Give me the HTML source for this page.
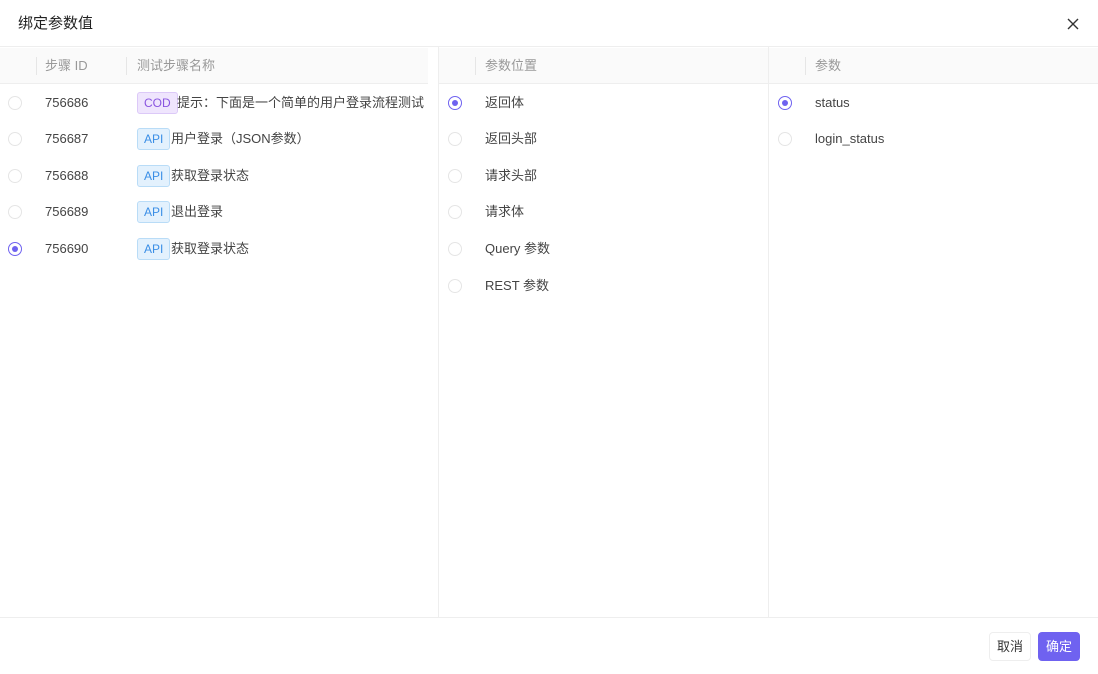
<!DOCTYPE html>
<html><head><meta charset="utf-8"><style>
*{box-sizing:border-box;margin:0;padding:0}
body{width:1098px;height:674px;background:#fff;font-family:"Liberation Sans","Noto Sans CJK SC",sans-serif;font-size:13px;line-height:18px;color:#333;position:relative;overflow:hidden}
.abs{position:absolute;white-space:nowrap}
.title{left:18px;top:14px;font-size:15px;line-height:20px;color:#222}
.hline{height:1px;background:#eee;left:0;width:1098px}
.vline{width:1px;background:#eee;top:47px;height:570px}
.thead{top:48px;height:36px;background:#fafafa;border-bottom:1px solid #eee}
.th{color:#999;top:57px}
.sep{width:1px;height:18px;background:#e6e6e6;top:57px}
.radio{width:14px;height:14px;border-radius:50%;border:1px solid #e5e5e5;background:#fff}
.radio.on{border-color:#6f62f0}
.radio.on::after{content:"";position:absolute;left:3px;top:3px;width:6px;height:6px;border-radius:50%;background:#6f62f0}
.t{color:#444}
.tag{height:22px;line-height:20px;padding:0 6px;border-radius:3px;font-size:12px}
.api{background:#e3f1fd;border:1px solid #b9dcf7;color:#3a8ee6}
.cod{background:#efe5fd;border:1px solid #dcc9f8;color:#8a55e0}
.btn{top:632px;height:29px;line-height:27px;width:42px;text-align:center;border-radius:4px;font-size:13px}
</style></head><body>
<div class="abs title">绑定参数值</div>
<svg class="abs" style="left:1066px;top:17px" width="14" height="14" viewBox="0 0 14 14"><path d="M2 2L12 12M12 2L2 12" stroke="#333" stroke-width="1.4"/></svg>
<div class="abs hline" style="top:46px"></div>
<div class="abs thead" style="left:0;width:428px"></div>
<div class="abs thead" style="left:439px;width:329px"></div>
<div class="abs thead" style="left:769px;width:329px"></div>
<div class="abs sep" style="left:36px"></div>
<div class="abs sep" style="left:126px"></div>
<div class="abs sep" style="left:475px"></div>
<div class="abs sep" style="left:805px"></div>
<div class="abs th" style="left:45px">步骤 ID</div>
<div class="abs th" style="left:137px">测试步骤名称</div>
<div class="abs th" style="left:485px">参数位置</div>
<div class="abs th" style="left:815px">参数</div>
<div class="abs vline" style="left:438px"></div>
<div class="abs vline" style="left:768px"></div>

<div class="abs radio" style="left:8px;top:96px"></div>
<div class="abs radio" style="left:8px;top:132px"></div>
<div class="abs radio" style="left:8px;top:169px"></div>
<div class="abs radio" style="left:8px;top:205px"></div>
<div class="abs radio on" style="left:8px;top:242px"></div>
<div class="abs t" style="left:45px;top:94px">756686</div>
<div class="abs t" style="left:45px;top:130px">756687</div>
<div class="abs t" style="left:45px;top:167px">756688</div>
<div class="abs t" style="left:45px;top:203px">756689</div>
<div class="abs t" style="left:45px;top:240px">756690</div>
<div class="abs tag cod" style="left:137px;top:92px">COD</div><div class="abs t" style="left:177px;top:94px">提示：下面是一个简单的用户登录流程测试</div>
<div class="abs tag api" style="left:137px;top:128px">API</div><div class="abs t" style="left:171px;top:130px">用户登录（JSON参数）</div>
<div class="abs tag api" style="left:137px;top:165px">API</div><div class="abs t" style="left:171px;top:167px">获取登录状态</div>
<div class="abs tag api" style="left:137px;top:201px">API</div><div class="abs t" style="left:171px;top:203px">退出登录</div>
<div class="abs tag api" style="left:137px;top:238px">API</div><div class="abs t" style="left:171px;top:240px">获取登录状态</div>

<div class="abs radio on" style="left:448px;top:96px"></div>
<div class="abs radio" style="left:448px;top:132px"></div>
<div class="abs radio" style="left:448px;top:169px"></div>
<div class="abs radio" style="left:448px;top:205px"></div>
<div class="abs radio" style="left:448px;top:242px"></div>
<div class="abs radio" style="left:448px;top:279px"></div>
<div class="abs t" style="left:485px;top:94px">返回体</div>
<div class="abs t" style="left:485px;top:130px">返回头部</div>
<div class="abs t" style="left:485px;top:167px">请求头部</div>
<div class="abs t" style="left:485px;top:203px">请求体</div>
<div class="abs t" style="left:485px;top:240px">Query 参数</div>
<div class="abs t" style="left:485px;top:277px">REST 参数</div>

<div class="abs radio on" style="left:778px;top:96px"></div>
<div class="abs radio" style="left:778px;top:132px"></div>
<div class="abs t" style="left:815px;top:94px">status</div>
<div class="abs t" style="left:815px;top:130px">login_status</div>

<div class="abs hline" style="top:617px"></div>
<div class="abs btn" style="left:989px;border:1px solid #eee;color:#333">取消</div>
<div class="abs btn" style="left:1038px;background:#6f62f0;color:#fff;line-height:29px">确定</div>
</body></html>
